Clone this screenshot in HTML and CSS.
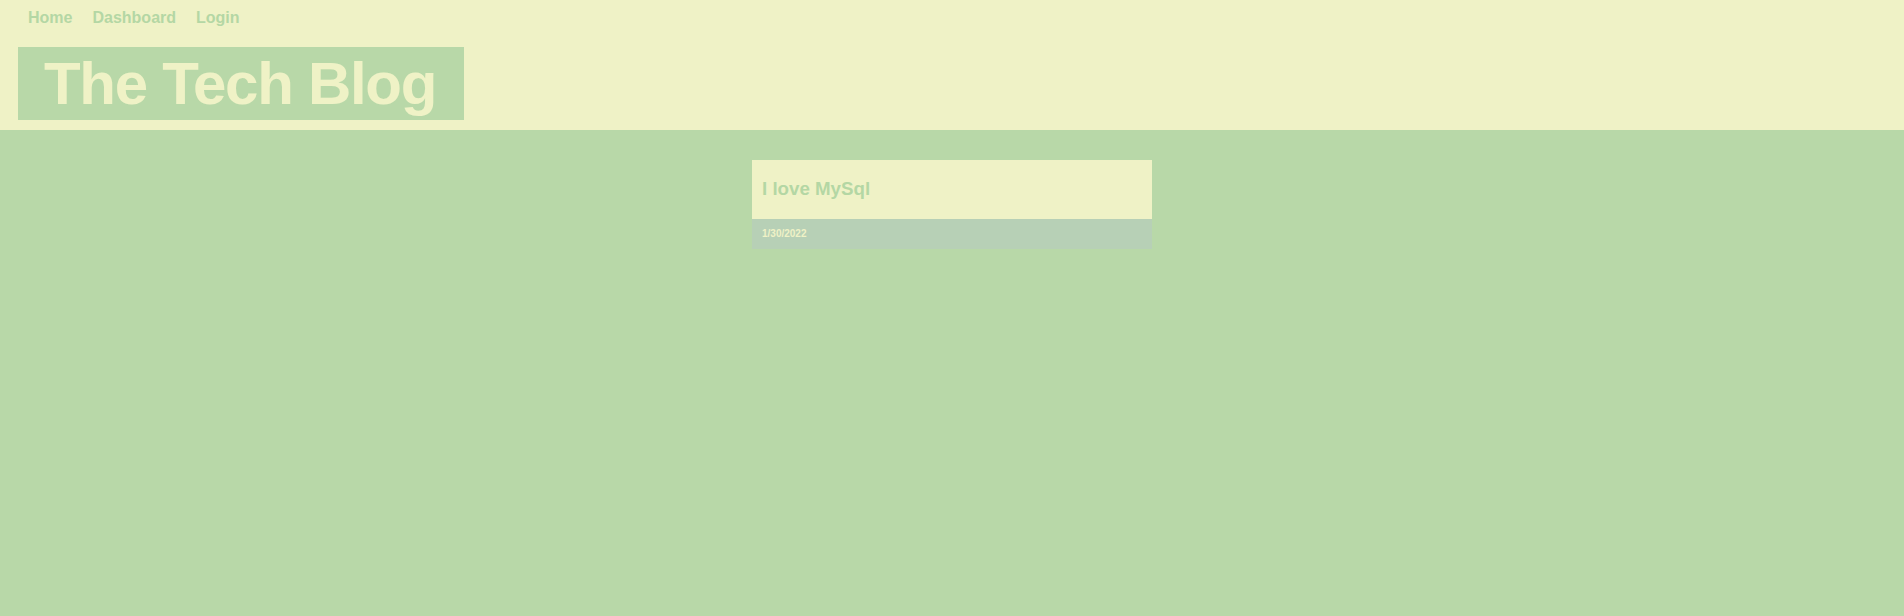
FILE: index.html
```html
<!DOCTYPE html>
<html lang="en">
<head>
<meta charset="utf-8">
<title>The Tech Blog</title>
<link rel="stylesheet" href="styles.css">
</head>
<body>
<header class="site-header">
  <nav class="nav">
    <a class="nav-link" href="#">Home</a>
    <a class="nav-link" href="#">Dashboard</a>
    <a class="nav-link" href="#">Login</a>
  </nav>
  <h1 class="brand">The Tech Blog</h1>
</header>
<main class="content">
  <article class="post-card">
    <h3 class="post-title">I love MySql</h3>
    <div class="post-meta">1/30/2022</div>
  </article>
</main>
</body>
</html>
```

FILE: styles.css
```css
html, body {
  margin: 0;
  padding: 0;
  height: 100%;
}

body {
  background: #b8d8a8;
  font-family: "Liberation Sans", Arial, sans-serif;
}

.site-header {
  background: #eff2c6;
  padding: 0 0 10px 18px;
}

.nav {
  display: flex;
  gap: 20px;
  padding: 9px 0 0 10px;
}

.nav-link {
  color: #b4d7a4;
  font-weight: bold;
  font-size: 16px;
  line-height: 18px;
  text-decoration: none;
}

.brand {
  display: inline-block;
  margin: 20px 0 0;
  padding: 4px 28px 3px 26px;
  background: #b8d8a8;
  color: #eff2c6;
  font-size: 60px;
  line-height: 66px;
  letter-spacing: -1.3px;
  font-weight: bold;
}

.content {
  display: flex;
  justify-content: center;
  padding-top: 30px;
}

.post-card {
  width: 400px;
}

.post-title {
  margin: 0;
  padding: 18px 10px 19px;
  background: #eff2c6;
  color: #b4d7a4;
  font-size: 18.72px;
  line-height: 22px;
  font-weight: bold;
}

.post-meta {
  padding: 9px 10px;
  background: #b7d0b6;
  color: #eff2c6;
  font-size: 10px;
  line-height: 12px;
  font-weight: bold;
}
```
